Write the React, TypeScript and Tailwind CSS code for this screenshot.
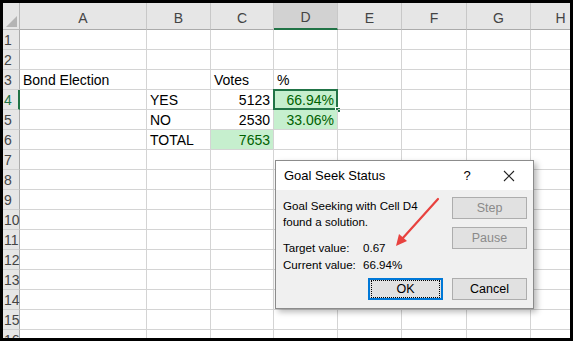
import React from "react";

const COLS = ["A", "B", "C", "D", "E", "F", "G", "H"];
const ROWS = Array.from({ length: 16 }, (_, i) => i + 1);

type Cell = { v: string; right?: boolean; green?: boolean };

const cells: Record<string, Cell> = {
  A3: { v: "Bond Election" },
  C3: { v: "Votes" },
  D3: { v: "%" },
  B4: { v: "YES" },
  C4: { v: "5123", right: true },
  D4: { v: "66.94%", right: true, green: true },
  B5: { v: "NO" },
  C5: { v: "2530", right: true },
  D5: { v: "33.06%", right: true, green: true },
  B6: { v: "TOTAL" },
  C6: { v: "7653", right: true, green: true },
};

const sheetFont = { fontFamily: '"Liberation Sans", Arial, sans-serif' };
const uiFont = { fontFamily: '"Liberation Sans", "Noto Sans", sans-serif' };

function Button({ label, disabled, focused }: { label: string; disabled?: boolean; focused?: boolean }) {
  return (
    <div
      className={
        "w-[75px] h-[22px] flex items-center justify-center text-[12.5px] bg-[#e1e1e1] " +
        (focused ? "border-2 border-[#0078d7] " : "border border-[#adadad] ") +
        (disabled ? "text-[#8a8a8a]" : "text-black")
      }
    >
      {focused ? (
        <div className="w-full h-full m-[1px] border border-dotted border-black flex items-center justify-center">
          {label}
        </div>
      ) : (
        label
      )}
    </div>
  );
}

export default function App() {
  return (
    <div className="relative w-[573px] h-[341px] bg-black p-[3px] overflow-hidden" style={sheetFont}>
      <div className="w-full h-full bg-white overflow-hidden">
        <div className="grid grid-cols-[17px_127px_64px_63px_64px_64px_65px_64px_60px] grid-rows-[27px_repeat(16,20px)]">
          {/* corner */}
          <div className="relative bg-[#e6e6e6] border-r border-b border-[#b8b8b8]">
            <div className="absolute right-[2px] bottom-[2px] w-0 h-0 border-l-[11px] border-l-transparent border-b-[11px] border-b-[#b4b4b4]" />
          </div>
          {COLS.map((c) => (
            <div
              key={c}
              className={
                "flex items-center justify-center pt-[4px] text-[14px] text-[#444] border-r border-[#c8c8c8] " +
                (c === "D"
                  ? "bg-[#d2d2d2] border-b-2 border-b-[#217346]"
                  : "bg-[#e6e6e6] border-b border-b-[#ababab]")
              }
            >
              {c}
            </div>
          ))}

          {ROWS.map((r) => (
            <React.Fragment key={r}>
              <div
                className={
                  "flex items-center pl-[1px] pt-[2px] text-[14px] bg-[#e6e6e6] border-b border-[#cfcfcf] " +
                  (r === 4 ? "text-[#217346] border-r-2 border-r-[#217346]" : "text-[#444] border-r border-r-[#ababab]")
                }
              >
                {r}
              </div>
              {COLS.map((c) => {
                const cell = cells[c + r];
                const sel = c === "D" && r === 4;
                return (
                  <div
                    key={c}
                    className={
                      "relative flex items-end px-[3px] text-[14px] leading-[17px] border-r border-b border-[#d4d4d4] " +
                      (cell?.right ? "justify-end " : "") +
                      (cell?.green ? "bg-[#c6efce] text-[#006100]" : "text-black")
                    }
                  >
                    {cell?.v}
                    {sel && (
                      <>
                        <div className="absolute -left-[1px] -top-[1px] -right-[1px] -bottom-[1px] border-2 border-[#217346]" />
                        <div className="absolute -right-[4px] -bottom-[4px] w-[6px] h-[6px] bg-[#217346] border border-white" />
                      </>
                    )}
                  </div>
                );
              })}
            </React.Fragment>
          ))}
        </div>
      </div>

      {/* Goal Seek Status dialog */}
      <div
        className="absolute left-[275px] top-[160px] w-[259px] h-[149px] border border-[#8c8c8c] bg-[#f0f0f0] flex flex-col shadow-[3px_3px_6px_rgba(0,0,0,0.28)]"
        style={uiFont}
      >
        <div className="h-[29px] bg-white flex items-center pl-[8px] text-[13px] text-black">
          <span className="flex-1">Goal Seek Status</span>
          <span className="w-[20px] text-center text-[13px] mr-[26px]">?</span>
          <svg width="12" height="12" viewBox="0 0 12 12" className="mr-[18px]">
            <path d="M1 1 L11 11 M11 1 L1 11" stroke="#222" strokeWidth="1.1" fill="none" />
          </svg>
        </div>
        <div className="flex flex-1 pl-[7px] pr-[6px] pt-[8px]">
          <div className="flex-1 text-[11.6px] leading-[16px] text-black">
            <div>Goal Seeking with Cell D4</div>
            <div>found a solution.</div>
            <div className="flex mt-[9px] leading-[17px]">
              <div className="w-[80px]">
                <div>Target value:</div>
                <div>Current value:</div>
              </div>
              <div>
                <div>0.67</div>
                <div>66.94%</div>
              </div>
            </div>
          </div>
          <div className="flex flex-col gap-[8px] -mt-[1px]">
            <Button label="Step" disabled />
            <Button label="Pause" disabled />
          </div>
        </div>
        <div className="flex justify-end gap-[9px] pr-[6px] pb-[8px]">
          <Button label="OK" focused />
          <Button label="Cancel" />
        </div>
      </div>

      {/* red arrow */}
      <svg className="absolute left-0 top-0 pointer-events-none" width="573" height="341">
        <line x1="438" y1="199" x2="402" y2="239" stroke="#e8423f" strokeWidth="2.2" strokeLinecap="round" />
        <polygon points="396,246 399,234 407,241" fill="#e8423f" />
      </svg>
    </div>
  );
}
